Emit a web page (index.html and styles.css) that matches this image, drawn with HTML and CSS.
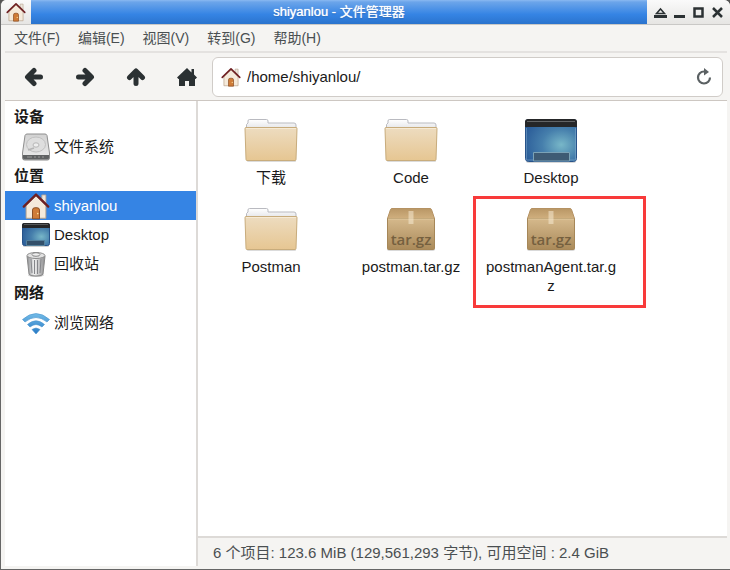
FILE: index.html
```html
<!DOCTYPE html>
<html lang="zh-CN">
<head>
<meta charset="utf-8">
<title>shiyanlou - 文件管理器</title>
<link rel="stylesheet" href="styles.css">
</head>
<body>
<svg class="defs" aria-hidden="true">
  <defs>
    <linearGradient id="gFolder" x1="0" y1="0" x2="0" y2="1"><stop offset="0" stop-color="#eddcc0"/><stop offset="1" stop-color="#e6c692"/></linearGradient>
    <linearGradient id="gPaper" x1="0" y1="0" x2="0" y2="1"><stop offset="0" stop-color="#fff"/><stop offset="1" stop-color="#e6e7ea"/></linearGradient>
    <linearGradient id="gBox" x1="0" y1="0" x2="0" y2="1"><stop offset="0" stop-color="#d5b98c"/><stop offset="1" stop-color="#aa8a5a"/></linearGradient>
    <linearGradient id="gLid" x1="0" y1="0" x2="0" y2="1"><stop offset="0" stop-color="#b99766"/><stop offset="1" stop-color="#d0af7e"/></linearGradient>
    <radialGradient id="gDesk" cx=".7" cy=".6" r=".75"><stop offset="0" stop-color="#78b7c8"/><stop offset=".5" stop-color="#467fac"/><stop offset="1" stop-color="#2b5d99"/></radialGradient>
    <linearGradient id="gMetal" x1="0" y1="0" x2="1" y2="0"><stop offset="0" stop-color="#8b8d90"/><stop offset=".4" stop-color="#f1f1f1"/><stop offset="1" stop-color="#8d8d8f"/></linearGradient>
    <linearGradient id="gDisk" x1="0" y1="0" x2="0" y2="1"><stop offset="0" stop-color="#d2d2d2"/><stop offset="1" stop-color="#ececec"/></linearGradient>
    <linearGradient id="gWifi" x1="0" y1="2" x2="0" y2="26" gradientUnits="userSpaceOnUse"><stop offset="0" stop-color="#7cc4ec"/><stop offset="1" stop-color="#2476c3"/></linearGradient>
    <symbol id="folder" viewBox="0 0 54 46">
      <rect x="3" y="42" width="49" height="2" rx="1" fill="#000" opacity=".14"/>
      <path d="M2.500 10V6.500L4 5V3q0-1.500 1.500-1.500h17q1.500 0 1.500 1.500v2h26q2 0 2 2v3z" fill="url(#gPaper)" stroke="#b9bac0"/>
      <path d="M2 9.500h50q1 0 1 1l-1 31q0 1-1 1H3q-1 0-1-1l-1-31q0-1 1-1z" fill="url(#gFolder)" stroke="#c8ac7c"/>
      <path d="M2 10.500h50" stroke="#f6ead4"/>
    </symbol>
    <symbol id="package" viewBox="0 0 50 46">
      <rect x="1" y="39" width="48" height="5" rx="2" fill="#000" opacity=".15"/>
      <path d="M6 1.500h38q1 0 1.500 1l3 9H1.500l3-9q.5-1 1.500-1z" fill="url(#gLid)" stroke="#b59263"/>
      <path d="M1.500 11.500h47v30q0 1-1 1h-45q-1 0-1-1z" fill="url(#gBox)" stroke="#a68758"/>
      <path d="M2 12h46" stroke="#e2ca9f"/>
      <path d="M22.500 4h5v13h-5z" fill="#f5e9d2" opacity=".55"/>
      <text x="25" y="38" text-anchor="middle" class="package-text">tar.gz</text>
    </symbol>
    <symbol id="desktop" viewBox="0 0 54 46">
      <rect x="2" y="41" width="50" height="4" rx="2" fill="#000" opacity=".16"/>
      <rect x="1.500" y="1.500" width="51" height="42" rx="3" fill="url(#gDesk)" stroke="#27538a"/>
      <path d="M1 9V4q0-3 3-3h46q3 0 3 3v5z" fill="#252628"/>
      <path d="M3 3.500h48" stroke="#626466"/>
      <path d="M2.500 10v32h49V10" fill="none" stroke="#8db3d2" opacity=".45"/>
      <path d="M9.500 43v-8.500h36V43z" fill="#3e5b74" stroke="#7ba2b6"/>
    </symbol>
    <symbol id="desktop-small" viewBox="0 0 28 26">
      <rect x="1" y="22" width="26" height="3" rx="1.500" fill="#000" opacity=".18"/>
      <rect x=".5" y="1.500" width="27" height="22" rx="2" fill="url(#gDesk)" stroke="#27538a"/>
      <path d="M0 6V3q0-2 2-2h24q2 0 2 2v3z" fill="#252628"/>
      <path d="M2 2.500h24" stroke="#55585a"/>
      <path d="M4.500 23.500v-5h18v5z" fill="#33506a" stroke="#55809b"/>
    </symbol>
    <symbol id="house" viewBox="0 0 24 24">
      <path d="M17 2.500h3.500v7L17 6z" fill="#eee6dc" stroke="#b4a08e" stroke-width=".7"/>
      <path d="M3.500 11.500 12 3l8.500 8.500v11h-17z" fill="#f5eadb" stroke="#b69f87" stroke-width=".8"/>
      <path d="M9 23v-7.500q0-2 2-2h2q2 0 2 2V23z" fill="#cf7c38" stroke="#87481e" stroke-width=".8"/>
      <circle cx="13.500" cy="18.500" r=".7" fill="#fbdf9c"/>
      <path d="M1.500 12.500 12 2.200l10.500 10.300" fill="none" stroke="#6f2022" stroke-width="2" stroke-linecap="round" stroke-linejoin="round"/>
    </symbol>
  </defs>
</svg>
<div class="window">
  <header class="titlebar">
    <span class="app-mark"><svg width="20" height="20"><use href="#house"/></svg></span>
    <h1 class="title">shiyanlou - 文件管理器</h1>
    <div class="controls">
      <button aria-label="卷起"><svg width="13" height="13" viewBox="0 0 13 13"><path d="M2.500 7.500 6.500 3l4 4.500z" fill="none" stroke="#2b3133" stroke-width="1.500"/><path d="M0 9h13v3H0z" fill="#2b3133"/></svg></button>
      <button aria-label="最小化"><svg width="13" height="13" viewBox="0 0 13 13"><path d="M1 9h11v3H1z" fill="#2b3133"/></svg></button>
      <button aria-label="最大化"><svg width="13" height="13" viewBox="0 0 13 13"><path d="M2.500 2.500h8v8h-8z" fill="none" stroke="#2b3133" stroke-width="2.500"/></svg></button>
      <button aria-label="关闭"><svg width="13" height="13" viewBox="0 0 13 13"><path d="m2 2 9 9M11 2l-9 9" stroke="#2b3133" stroke-width="2.500"/></svg></button>
    </div>
  </header>
  <nav class="menubar">
    <button>文件(F)</button><button>编辑(E)</button><button>视图(V)</button><button>转到(G)</button><button>帮助(H)</button>
  </nav>
  <div class="toolbar">
    <div class="nav-buttons">
      <button aria-label="后退"><svg width="20" height="20" viewBox="0 0 20 20"><path d="M16.500 10H5M10 3.500 3.500 10l6.500 6.500" class="arrow"/></svg></button>
      <button aria-label="前进"><svg width="20" height="20" viewBox="0 0 20 20"><path d="M3.500 10H15M10 3.500l6.500 6.500-6.500 6.500" class="arrow"/></svg></button>
      <button aria-label="上级"><svg width="20" height="20" viewBox="0 0 20 20"><path d="M10 16.500V5M3.500 10.500 10 4l6.500 6.500" class="arrow"/></svg></button>
      <button aria-label="主目录"><svg width="20" height="20" viewBox="0 0 20 20"><path d="M10 1 0 10.500 1.500 12H2v7h6v-5h4v5h6v-7h.5l1.500-1.500-3-3V2h-2.500v3.500z" fill="#2b3133"/></svg></button>
    </div>
    <div class="location">
      <svg width="20" height="20" aria-hidden="true"><use href="#house"/></svg>
      <input type="text" aria-label="路径" value="/home/shiyanlou/">
      <button aria-label="刷新"><svg width="16" height="18" viewBox="0 0 16 18"><path d="M9 3.500H8a6 6 0 1 0 6 6" fill="none" stroke="#5b6163" stroke-width="2.200"/><path d="M8 0v7.500L13 4z" fill="#5b6163"/></svg></button>
    </div>
  </div>
  <div class="body">
    <aside class="sidebar">
      <h2>设备</h2>
      <a href="#fs"><svg width="28" height="28" viewBox="0 0 28 28"><path d="M5 1h18q1.500 0 2 1.500L27.500 20v5q0 2-2 2h-23q-2 0-2-2v-5L3 2.500Q3.500 1 5 1z" fill="url(#gDisk)" stroke="#8e8e8e"/><path d="M1 22h26v3q0 1.500-1.500 1.500h-23Q1 26.500 1 25z" fill="#606263"/><path d="M5 24h5M12 24h2M16 24h2M20 24h2" stroke="#999"/><ellipse cx="14" cy="11.500" rx="9.500" ry="7.500" fill="#dedede" stroke="#c0c0c0"/><ellipse cx="14" cy="12" rx="3" ry="2.200" fill="#eee" stroke="#b6b6b6"/><path d="m6 17 6-2" stroke="#b5b5b5" stroke-width="1.500"/></svg>文件系统</a>
      <h2>位置</h2>
      <a href="#home" class="selected"><svg width="28" height="28"><use href="#house"/></svg>shiyanlou</a>
      <a href="#desk"><svg width="28" height="26"><use href="#desktop-small"/></svg>Desktop</a>
      <a href="#trash"><svg width="28" height="28" viewBox="0 0 28 28"><ellipse cx="14" cy="25" rx="8" ry="2" fill="#000" opacity=".2"/><path d="M5 6h18l-2 18q-.5 2-7 2t-7-2z" fill="url(#gMetal)" stroke="#888"/><path d="m9 9 1 14M12.500 10v14M15.500 10v14M19 9l-1 14" stroke="#85868a"/><ellipse cx="14" cy="5.500" rx="9" ry="3" fill="#e1e1e1" stroke="#8b8b8b"/><ellipse cx="14" cy="4.500" rx="4" ry="1.800" fill="#eee" stroke="#888"/></svg>回收站</a>
      <h2>网络</h2>
      <a href="#net"><svg width="28" height="28" viewBox="0 0 28 28"><path d="M.5 10.500Q14-1.500 27.500 10.500L25 13Q14 4 3 13zM5.500 15.500q8.500-7.500 17 0L20 18q-6-5-12 0zM10 20.500q4-3 8 0l-4 4.500z" fill="url(#gWifi)" stroke="#4792cc" stroke-width=".6" stroke-linejoin="round"/></svg>浏览网络</a>
    </aside>
    <main class="content">
      <ul class="files">
        <li><svg width="54" height="46"><use href="#folder"/></svg><span>下载</span></li>
        <li><svg width="54" height="46"><use href="#folder"/></svg><span>Code</span></li>
        <li><svg width="54" height="46"><use href="#desktop"/></svg><span>Desktop</span></li>
        <li><svg width="54" height="46"><use href="#folder"/></svg><span>Postman</span></li>
        <li><svg width="54" height="46"><use href="#package"/></svg><span>postman.tar.gz</span></li>
        <li class="marked"><svg width="54" height="46"><use href="#package"/></svg><span>postmanAgent.tar.gz</span></li>
      </ul>
      <footer class="status">6 个项目: 123.6 MiB (129,561,293 字节), 可用空间 : 2.4 GiB</footer>
    </main>
  </div>
</div>
</body>
</html>
```
FILE: styles.css
```css
* { box-sizing: border-box; }
body {
  margin: 0;
  background: #555;
  color: #1a1a1a;
  font: 15px/19px "Liberation Sans", "Noto Sans CJK SC", sans-serif;
}
button {
  display: flex;
  align-items: center;
  justify-content: center;
  margin: 0;
  padding: 0;
  border: 0;
  background: none;
  color: inherit;
  font: inherit;
}
svg { display: block; flex: none; }
.defs { position: absolute; width: 0; height: 0; }
.window {
  display: flex;
  flex-direction: column;
  min-height: 100vh;
  border-left: 1px solid #666;
  border-bottom: 1px solid #666;
  border-radius: 6px 6px 0 0;
  background: #f5f4f2;
  overflow: hidden;
}
.titlebar {
  display: flex;
  height: 25px;
  border-bottom: 1px solid #c9c8c6;
  background: linear-gradient(#fafafa, #e6e5e3);
}
.app-mark { display: flex; align-items: center; justify-content: center; width: 30px; }
.title {
  flex: 1;
  margin: 0;
  background: linear-gradient(#8ab9f1 0, #6ca5ea 2px, #3584e4 60%, #2a73cd);
  color: #fff;
  font-size: 13px;
  font-weight: 400;
  line-height: 24px;
  text-align: center;
  text-shadow: 0 0 1px #fff, 0 1px 1px #1a5fb4;
}
.controls { display: flex; align-items: center; gap: 6px; padding: 0 6px 0 7px; }
.menubar {
  display: flex;
  gap: 18px;
  height: 28px;
  margin: 0 3px 0 4px;
  padding: 0 9px;
  border-bottom: 2px solid #e4e2e0;
  color: #4a4f51;
  font-size: 14px;
}
.toolbar {
  display: flex;
  align-items: center;
  height: 48px;
  margin: 0 3px 0 4px;
  padding: 0 4px 0 3px;
  border-bottom: 1px solid #cdc7c2;
}
.nav-buttons { display: flex; }
.nav-buttons button { width: 51px; height: 38px; }
.arrow { fill: none; stroke: #2b3133; stroke-width: 5; stroke-linecap: round; stroke-linejoin: round; }
.location {
  display: flex;
  flex: 1;
  align-items: center;
  gap: 6px;
  height: 40px;
  padding: 0 10px 0 8px;
  border: 1px solid #d0ccc8;
  border-radius: 6px;
  background: #fff;
}
.location input {
  flex: 1;
  min-width: 0;
  padding: 0;
  border: 0;
  outline: 0;
  background: none;
  color: #1a1a1a;
  font: inherit;
}
.body { display: flex; flex: 1; margin: 0 3px 3px 4px; }
.sidebar {
  width: 193px;
  padding-top: 1px;
  border-right: 2px solid #dddad7;
  background: #fff;
}
.sidebar h2 { margin: 0; padding-left: 9px; font-size: 15px; line-height: 30px; }
.sidebar a {
  display: flex;
  align-items: center;
  gap: 4px;
  height: 29px;
  padding-left: 17px;
  color: #1a1a1a;
  text-decoration: none;
}
.sidebar .selected { background: #3584e4; color: #fff; }
.content { display: flex; flex: 1; flex-direction: column; background: #fff; }
.files {
  display: grid;
  flex: 1;
  grid-template-columns: repeat(auto-fill, 140px);
  grid-auto-rows: 89px;
  align-content: start;
  margin: 0;
  padding: 17px 3px;
  list-style: none;
}
.files li {
  display: flex;
  position: relative;
  flex-direction: column;
  align-items: center;
  gap: 4px;
}
.files span { max-width: 134px; text-align: center; word-break: break-all; }
.marked::after {
  content: "";
  position: absolute;
  inset: -11px -25px -12px -8px;
  border: 3px solid #f83a3a;
}
.package-text { fill: #75603f; font: 600 15px "Open Sans", sans-serif; }
.status {
  padding: 5px 15px 4px;
  border-top: 2px solid #dddad7;
  background: #f5f4f2;
  color: #4a4f51;
}
```
